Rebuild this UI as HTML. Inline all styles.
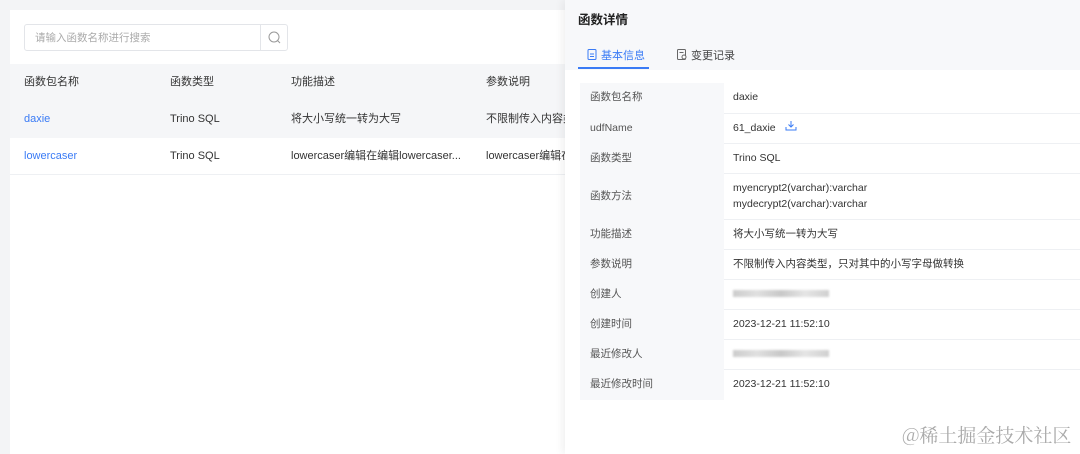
<!DOCTYPE html>
<html><head><meta charset="utf-8"><style>
*{margin:0;padding:0;box-sizing:border-box}
body{width:1080px;height:454px;overflow:hidden;background:#f3f4f6;font-family:"Liberation Sans","Noto Sans CJK SC",sans-serif;font-size:11px;color:#333;position:relative}
.card{position:absolute;left:10px;top:10px;width:560px;height:444px;background:#fff}
.search{position:absolute;left:24px;top:24px;width:264px;height:27px;border:1px solid #e3e5e9;border-radius:3px}
.search span{position:absolute;left:10px;top:7px;color:#aaa;font-size:10.5px;line-height:12px}
.search .btn{position:absolute;right:0;top:0;width:27px;height:25px;border-left:1px solid #e3e5e9}
.row{position:absolute;left:10px;width:556px;height:37px}
.row div{position:absolute;top:12px;white-space:nowrap;line-height:13px}
.drawer{position:absolute;left:565px;top:0;width:515px;height:454px;background:#fff;box-shadow:-3px 0 8px rgba(0,0,0,.06)}
.dh{position:absolute;left:0;top:0;width:515px;height:70px;background:#f7f8fa}
table{position:absolute;left:15px;top:83px;width:500px;border-collapse:collapse}
td{height:30px;font-size:10.5px;line-height:13px;border-bottom:1px solid #eef0f3}
td.l{width:144px;background:#f7f8fa;padding-left:10px;color:#555;border-bottom:1px solid #f7f8fa}
td.v{padding-left:9px;color:#333}
.blur{display:inline-block;width:96px;height:7px;background:linear-gradient(90deg,#ccc,#e0e0e0,#c8c8c8,#e5e5e5,#d0d0d0);filter:blur(1px)}
</style></head><body>
<div class="card">
</div>
<div class="search"><span>请输入函数名称进行搜索</span><div class="btn"><svg width="27" height="25"><circle cx="13" cy="12" r="5" fill="none" stroke="#999" stroke-width="1"/><line x1="16.5" y1="15.5" x2="19" y2="18" stroke="#999"/></svg></div></div>
<div class="row" style="top:64px;background:#f5f6f8"><div style="left:14px">函数包名称</div><div style="left:160px">函数类型</div><div style="left:281px">功能描述</div><div style="left:476px">参数说明</div></div>
<div class="row" style="top:101px;background:#f5f6f8"><div style="left:14px;color:#3a7bf5">daxie</div><div style="left:160px">Trino SQL</div><div style="left:281px">将大小写统一转为大写</div><div style="left:476px">不限制传入内容类</div></div>
<div class="row" style="top:138px;border-bottom:1px solid #eef0f3"><div style="left:14px;color:#3a7bf5">lowercaser</div><div style="left:160px">Trino SQL</div><div style="left:281px">lowercaser编辑在编辑lowercaser...</div><div style="left:476px">lowercaser编辑在</div></div>
<div style="position:absolute;left:565px;top:311px;width:10px;height:46px;background:#dfe1e5;border-radius:2px 0 0 2px;color:#666;font-size:10px;line-height:46px;text-align:center">›</div>
<div class="drawer">
<div class="dh">
<div style="position:absolute;left:13px;top:13px;font-size:12.5px;font-weight:bold;color:#222;line-height:15px">函数详情</div>
<div style="position:absolute;left:22px;top:49px;color:#3a7bf5;font-size:11px;line-height:13px"><svg width="10" height="11" style="vertical-align:-1px;margin-right:4px"><rect x="1" y="0.5" width="8" height="10" rx="1" fill="none" stroke="#3a7bf5"/><line x1="3" y1="5" x2="7" y2="5" stroke="#3a7bf5"/><line x1="3" y1="7.5" x2="7" y2="7.5" stroke="#3a7bf5"/></svg>基本信息</div>
<div style="position:absolute;left:13px;top:67px;width:71px;height:2px;background:#3a7bf5"></div>
<div style="position:absolute;left:112px;top:49px;color:#444;font-size:11px;line-height:13px"><svg width="10" height="11" style="vertical-align:-1px;margin-right:4px"><rect x="0.5" y="0.5" width="8" height="10" rx="1" fill="none" stroke="#666"/><line x1="2.5" y1="3.5" x2="6.5" y2="3.5" stroke="#666"/><circle cx="7" cy="8" r="2" fill="#fff" stroke="#666"/></svg>变更记录</div>
</div>
<table>
<tr><td class="l">函数包名称</td><td class="v">daxie</td></tr>
<tr><td class="l">udfName</td><td class="v">61_daxie <svg width="12" height="10" style="margin-left:6px;vertical-align:0"><path d="M6 0v6M3.5 3.5L6 6l2.5-2.5M1 6v3h10V6" fill="none" stroke="#3a7bf5"/></svg></td></tr>
<tr><td class="l">函数类型</td><td class="v">Trino SQL</td></tr>
<tr><td class="l" style="height:46px">函数方法</td><td class="v" style="line-height:16px">myencrypt2(varchar):varchar<br>mydecrypt2(varchar):varchar</td></tr>
<tr><td class="l">功能描述</td><td class="v">将大小写统一转为大写</td></tr>
<tr><td class="l">参数说明</td><td class="v">不限制传入内容类型，只对其中的小写字母做转换</td></tr>
<tr><td class="l">创建人</td><td class="v"><span class="blur"></span></td></tr>
<tr><td class="l">创建时间</td><td class="v">2023-12-21 11:52:10</td></tr>
<tr><td class="l">最近修改人</td><td class="v"><span class="blur"></span></td></tr>
<tr><td class="l">最近修改时间</td><td class="v" style="border-bottom:none">2023-12-21 11:52:10</td></tr>
</table>
<div style="position:absolute;left:337px;top:424px;font-family:'Noto Serif CJK SC',serif;font-size:19px;line-height:22px;color:#aaa;white-space:nowrap">@稀土掘金技术社区</div>
</div>
</body></html>
